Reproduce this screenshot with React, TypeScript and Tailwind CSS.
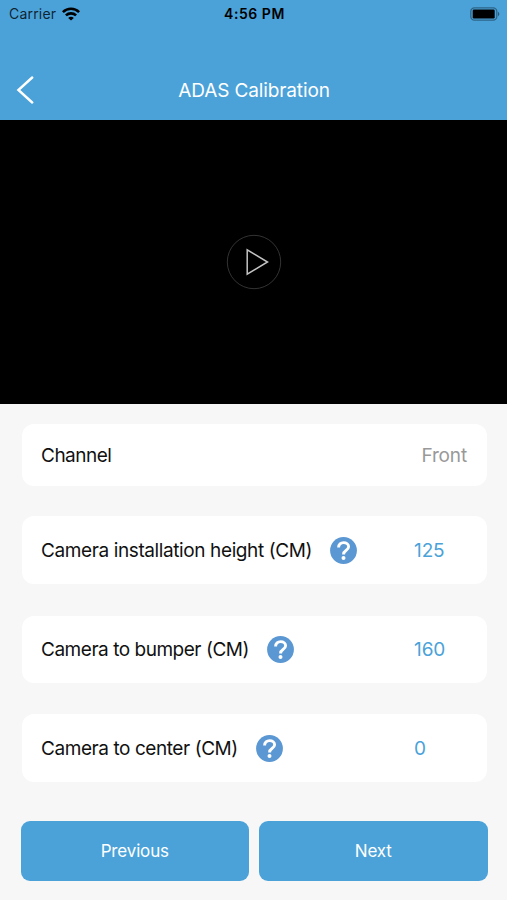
const settings = [
  { label: "Camera installation height (CM)", value: "125", card: "mt-[30px] h-[68px]", tracking: "tracking-[-0.39px]" },
  { label: "Camera to bumper (CM)", value: "160", card: "mt-8 h-[67px]", tracking: "tracking-[-0.47px]" },
  { label: "Camera to center (CM)", value: "0", card: "mt-[31px] h-[68px]", tracking: "tracking-[-0.43px]" },
]

function WifiIcon() {
  return (
    <svg className="h-[14px] w-[18px]" viewBox="0 0 18 14" fill="none" stroke="#000" strokeWidth="2.6">
      <path d="M0.9 5.1C5.4 0.7 12.6 0.7 17.1 5.1" />
      <path d="M3.9 8.4C6.8 5.7 11.2 5.7 14.1 8.4" />
      <path d="M9 13.6L6.2 10.9C7.8 9.4 10.2 9.4 11.8 10.9Z" fill="#000" stroke="none" />
    </svg>
  )
}

function BatteryIcon() {
  return (
    <svg className="h-[14px] w-[30px]" viewBox="0 0 30 14" fill="none">
      <rect x="0.8" y="0.8" width="26" height="12.4" rx="3.6" stroke="#000" strokeOpacity="0.38" strokeWidth="1.3" />
      <rect x="2.7" y="2.6" width="22" height="8.8" rx="1.2" fill="#000" />
      <path d="M28 4.8C29.8 5.5 29.8 8.5 28 9.2Z" fill="#000" fillOpacity="0.45" />
    </svg>
  )
}

function HelpIcon() {
  return (
    <svg className="size-[27px] shrink-0" viewBox="0 0 27 27" fill="none">
      <circle cx="13.5" cy="13.5" r="13.4" fill="#5b97d2" />
      <path
        d="M8.6 10.4C8.6 7.2 10.8 5.6 13.6 5.6C16.5 5.6 18.6 7.3 18.6 9.8C18.6 11.5 17.5 12.5 16 13.5C14.3 14.6 13.6 15.3 13.6 17.4"
        stroke="#fff"
        strokeWidth="2.9"
      />
      <circle cx="13.5" cy="21" r="2" fill="#fff" />
    </svg>
  )
}

export default function App() {
  return (
    <div className="flex h-[900px] w-[507px] flex-col overflow-hidden bg-[#f7f7f7] font-['Inter',sans-serif] text-[19px] text-[#111]">
      <header className="h-[120px] bg-[#4aa2d9]">
        <div className="grid h-7 grid-cols-3 items-center pr-[7px] pl-[9px] text-sm text-black">
          <div className="flex items-center gap-[6px]">
            <span className="tracking-[0.2px] text-black/80">Carrier</span>
            <WifiIcon />
          </div>
          <span className="text-center font-semibold tracking-[0.55px]">4:56 PM</span>
          <div className="flex justify-end">
            <BatteryIcon />
          </div>
        </div>
        <div className="mt-8 grid h-[60px] grid-cols-[1fr_auto_1fr] items-center pl-4 text-white">
          <button className="w-fit">
            <svg className="h-7 w-[18px]" viewBox="0 0 18 28" fill="none" stroke="#fff" strokeWidth="2.4" strokeLinecap="round">
              <path d="M16.2 1.5L2.4 14L16.2 26.5" />
            </svg>
          </button>
          <h1 className="pt-0.5 pr-[15px] tracking-[-0.12px]">ADAS Calibration</h1>
        </div>
      </header>

      <div className="flex h-[284px] items-center justify-center bg-black">
        <svg className="size-14" viewBox="0 0 56 56" fill="none">
          <circle cx="28" cy="28" r="26.7" stroke="#333" />
          <path d="M21.2 15.8V40.2L41.5 28Z" stroke="#c4c4c4" strokeWidth="1.5" />
        </svg>
      </div>

      <main className="pt-5 pr-5 pl-[22px]">
        <div className="flex h-[62px] items-center justify-between rounded-xl bg-white pt-0.5 pr-5 pl-[19px]">
          <span className="tracking-[-0.5px]">Channel</span>
          <span className="tracking-[-0.15px] text-[#999]">Front</span>
        </div>
        {settings.map((item) => (
          <div key={item.label} className={`flex items-center rounded-xl bg-white pl-[19px] ${item.card}`}>
            <div className="flex flex-1 items-center gap-[18px]">
              <span className={`pt-0.5 ${item.tracking}`}>{item.label}</span>
              <HelpIcon />
            </div>
            <span className="w-[73px] pt-0.5 tracking-[-0.1px] text-[#4aa2d9]">{item.value}</span>
          </div>
        ))}
      </main>

      <div className="mt-[38.5px] grid grid-cols-2 gap-[10px] pr-[19.5px] pl-[20.5px] text-[17px] text-white">
        <button className="h-[60px] rounded-[9px] bg-[#4aa2d9] pt-0.5 tracking-[-0.15px]">Previous</button>
        <button className="h-[60px] rounded-[9px] bg-[#4aa2d9] pt-0.5 tracking-[-0.1px]">Next</button>
      </div>
    </div>
  )
}
